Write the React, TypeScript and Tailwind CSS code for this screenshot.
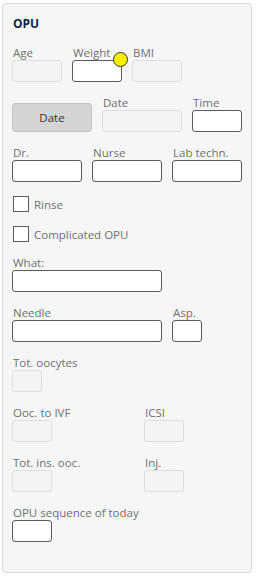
import React from "react";

const font = "font-['Open_Sans',sans-serif]";

const Label = ({ children }: { children: React.ReactNode }) => (
  <div className="h-4 pl-px text-[11.5px] leading-[18px] text-[#707070] whitespace-nowrap">{children}</div>
);

const Box = ({ w, on }: { w: string; on?: boolean }) => (
  <div
    className={`${w} h-[22px] rounded-[3px] border ${
      on ? "border-[#5b5b5b] bg-white" : "border-[#dedede] bg-[#f4f4f4]"
    }`}
  />
);

const Field = ({ label, w, on }: { label: string; w: string; on?: boolean }) => (
  <div className="flex flex-col">
    <Label>{label}</Label>
    <Box w={w} on={on} />
  </div>
);

const Check = ({ label }: { label: string }) => (
  <div className="flex h-4 items-center gap-[5px] pl-px">
    <div className="w-4 h-4 border border-[#5b5b5b] bg-white" />
    <span className="h-4 text-[11.5px] leading-[18px] text-[#707070]">{label}</span>
  </div>
);

export default function App() {
  return (
    <div className={`bg-white min-h-[577px] pt-[3px] pl-[2px] ${font}`}>
      <div className="w-[250px] h-[570px] rounded-[4px] border border-[#dadada] bg-[#f6f6f6] pl-[9px] pt-[12px]">
        {/* Title */}
        <div className="h-4 pl-px text-[12px] leading-4 font-bold text-[#0f1f45]">OPU</div>

        {/* Age / Weight / BMI */}
        <div className="mt-3 flex gap-[10px]">
          <Field label="Age" w="w-[50px]" />
          <div className="flex flex-col">
            <Label>Weight</Label>
            <div className="relative">
              <Box w="w-[50px]" on />
              <span className="absolute left-[41px] top-[-8px] w-[15px] h-[15px] rounded-full bg-[#ffee00] border border-[#333]" />
            </div>
          </div>
          <Field label="BMI" w="w-[50px]" />
        </div>

        {/* Date button / date / time */}
        <div className="mt-3 flex items-end gap-[10px]">
          <button className="w-20 h-[29px] rounded-[3px] border border-[#c4c4c4] bg-[#d4d4d4] text-[11.5px] text-[#333]">
            Date
          </button>
          <Field label="Date" w="w-20" />
          <Field label="Time" w="w-[50px]" on />
        </div>

        {/* Staff */}
        <div className="mt-3 flex gap-[10px]">
          <Field label="Dr." w="w-[70px]" on />
          <Field label="Nurse" w="w-[70px]" on />
          <Field label="Lab techn." w="w-[70px]" on />
        </div>

        <div className="mt-[14px]">
          <Check label="Rinse" />
        </div>
        <div className="mt-[14px]">
          <Check label="Complicated OPU" />
        </div>

        <div className="mt-3">
          <Field label="What:" w="w-[150px]" on />
        </div>

        <div className="mt-3 flex gap-[10px]">
          <Field label="Needle" w="w-[150px]" on />
          <Field label="Asp." w="w-[30px]" on />
        </div>

        <div className="mt-3">
          <Field label="Tot. oocytes" w="w-[30px]" />
        </div>

        <div className="mt-3 flex">
          <div className="w-[132px]">
            <Field label="Ooc. to IVF" w="w-10" />
          </div>
          <Field label="ICSI" w="w-10" />
        </div>

        <div className="mt-3 flex">
          <div className="w-[132px]">
            <Field label="Tot. ins. ooc." w="w-10" />
          </div>
          <Field label="Inj." w="w-10" />
        </div>

        <div className="mt-3">
          <Field label="OPU sequence of today" w="w-10" on />
        </div>
      </div>
    </div>
  );
}
